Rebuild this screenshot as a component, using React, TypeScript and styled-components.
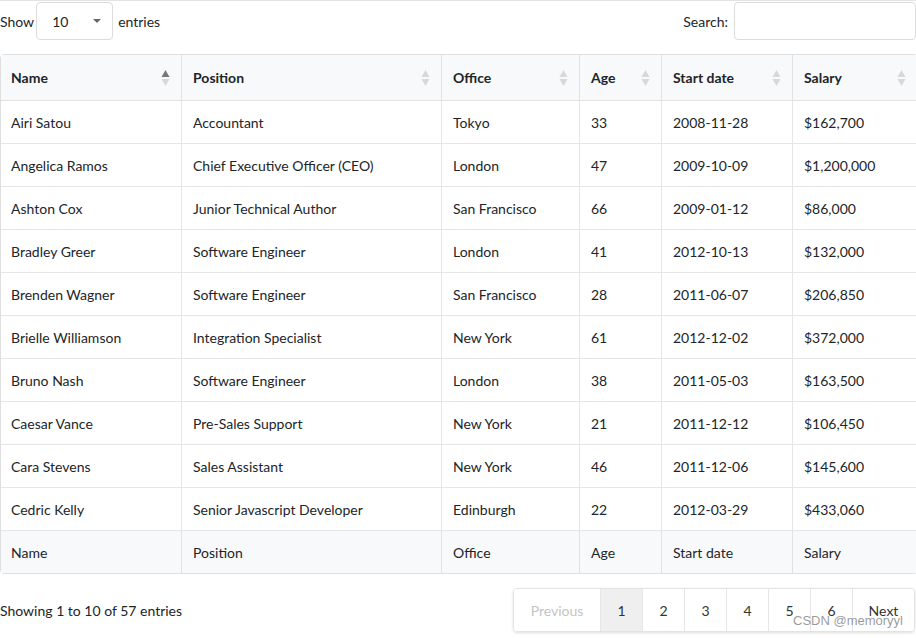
import * as React from "react";
import styled, { createGlobalStyle } from "styled-components";

const GlobalStyle = createGlobalStyle`
	body {
		margin: 0;
		background: #fff;
		font-family: Lato, "Open Sans", sans-serif;
		color: #212529;
	}
`;

const Page = styled.div`
	position: relative;
	width: 916px;
	height: 638px;
	border-top: 1px solid #e3e3e3;
	box-sizing: border-box;
	overflow: hidden;
`;

const TopBar = styled.div`
	display: flex;
	justify-content: space-between;
	align-items: center;
	height: 38px;
	margin-top: 1px;
	font-size: 14px;
`;

const Label = styled.label`
	display: flex;
	align-items: center;
	gap: 2px;
	color: #212529;
`;

const SelectBox = styled.div`
	display: flex;
	align-items: center;
	justify-content: space-between;
	box-sizing: border-box;
	width: 77px;
	height: 38px;
	padding: 0 11px 0 15px;
	border: 1px solid #dcdcdc;
	border-radius: 4px;
	margin-right: 3px;
`;

const Caret = styled.span`
	width: 0;
	height: 0;
	border-left: 4px solid transparent;
	border-right: 4px solid transparent;
	border-top: 4px solid #666;
`;

const SearchInput = styled.input`
	box-sizing: border-box;
	width: 182px;
	height: 38px;
	border: 1px solid #dcdcdc;
	border-radius: 4px;
	margin-left: 4px;
	outline: none;
`;

const Table = styled.table`
	margin-top: 14px;
	width: 916px;
	border-collapse: separate;
	border-spacing: 0;
	table-layout: fixed;
	border: 1px solid #dfdfdf;
	border-radius: 4px;
	font-size: 14px;
`;

const HeadCell = styled.th<{ $last?: boolean }>`
	position: relative;
	height: 45px;
	padding: 0 10px 0 11px;
	text-align: left;
	font-weight: 700;
	background: #f8f9fa;
	border-bottom: 1px solid #e2e2e2;
	border-right: ${p => (p.$last ? "none" : "1px solid #e2e2e2")};
	color: #212529;
	&:first-child {
		padding-left: 10px;
	}
`;

const Cell = styled.td<{ $last?: boolean }>`
	height: 42px;
	padding: 0 10px 0 11px;
	border-bottom: 1px solid #e6e6e6;
	border-right: ${p => (p.$last ? "none" : "1px solid #e6e6e6")};
	color: #212529;
	&:first-child {
		padding-left: 10px;
	}
`;

const FootCell = styled.td<{ $last?: boolean }>`
	height: 42px;
	padding: 0 10px 0 11px;
	background: #f8f9fa;
	border-right: ${p => (p.$last ? "none" : "1px solid #e2e2e2")};
	color: #212529;
	&:first-child {
		padding-left: 10px;
	}
`;

const SortIcon = styled.svg`
	position: absolute;
	right: 11px;
	top: 50%;
	transform: translateY(-50%);
`;

const BottomBar = styled.div`
	display: flex;
	justify-content: space-between;
	align-items: center;
	margin-top: 14px;
	font-size: 14px;
`;

const Pager = styled.div`
	display: flex;
	height: 42px;
	border: 1px solid #e3e3e3;
	border-radius: 4px;
	box-shadow: 0 1px 3px rgba(0, 0, 0, 0.12);
	margin-right: 1px;
	overflow: hidden;
`;

const PageButton = styled.div<{ $active?: boolean; $disabled?: boolean; $w: number }>`
	display: flex;
	align-items: center;
	justify-content: center;
	box-sizing: border-box;
	width: ${p => p.$w}px;
	border-left: 1px solid #e6e6e6;
	background: ${p => (p.$active ? "#efefef" : "#fff")};
	color: ${p => (p.$disabled ? "#c4c4c4" : "#333")};
	&:first-child {
		border-left: none;
	}
`;

const Watermark = styled.div`
	position: absolute;
	left: 793px;
	top: 612px;
	font-family: "Liberation Sans", Arial, sans-serif;
	font-size: 13px;
	color: rgba(120, 120, 120, 0.75);
`;

const columns = [
	{ name: "Name", width: 181 },
	{ name: "Position", width: 260 },
	{ name: "Office", width: 138 },
	{ name: "Age", width: 82 },
	{ name: "Start date", width: 131 },
	{ name: "Salary", width: 124 },
];

const rows = [
	["Airi Satou", "Accountant", "Tokyo", "33", "2008-11-28", "$162,700"],
	["Angelica Ramos", "Chief Executive Officer (CEO)", "London", "47", "2009-10-09", "$1,200,000"],
	["Ashton Cox", "Junior Technical Author", "San Francisco", "66", "2009-01-12", "$86,000"],
	["Bradley Greer", "Software Engineer", "London", "41", "2012-10-13", "$132,000"],
	["Brenden Wagner", "Software Engineer", "San Francisco", "28", "2011-06-07", "$206,850"],
	["Brielle Williamson", "Integration Specialist", "New York", "61", "2012-12-02", "$372,000"],
	["Bruno Nash", "Software Engineer", "London", "38", "2011-05-03", "$163,500"],
	["Caesar Vance", "Pre-Sales Support", "New York", "21", "2011-12-12", "$106,450"],
	["Cara Stevens", "Sales Assistant", "New York", "46", "2011-12-06", "$145,600"],
	["Cedric Kelly", "Senior Javascript Developer", "Edinburgh", "22", "2012-03-29", "$433,060"],
];

const Sort: React.FC<{ active?: boolean }> = ({ active }) => (
	<SortIcon width="9" height="18" viewBox="0 0 9 18">
		<path d="M4.5 1 L8.5 8 L0.5 8 Z" fill={active ? "#777" : "#d8d8d8"} />
		<path d="M4.5 17 L8.5 10 L0.5 10 Z" fill="#d8d8d8" />
	</SortIcon>
);

const pages = [
	{ label: "Previous", w: 86, disabled: true },
	{ label: "1", w: 42, active: true },
	{ label: "2", w: 42 },
	{ label: "3", w: 42 },
	{ label: "4", w: 42 },
	{ label: "5", w: 42 },
	{ label: "6", w: 42 },
	{ label: "Next", w: 62 },
];

export default function App() {
	return (
		<>
			<GlobalStyle />
			<Page>
				<TopBar>
					<Label>
						Show
						<SelectBox>
							<span>10</span>
							<Caret />
						</SelectBox>
						entries
					</Label>
					<Label>
						Search:
						<SearchInput type="search" />
					</Label>
				</TopBar>
				<Table>
					<colgroup>
						{columns.map(c => (
							<col key={c.name} style={{ width: c.width }} />
						))}
					</colgroup>
					<thead>
						<tr>
							{columns.map((c, i) => (
								<HeadCell key={c.name} $last={i === columns.length - 1}>
									{c.name}
									<Sort active={i === 0} />
								</HeadCell>
							))}
						</tr>
					</thead>
					<tbody>
						{rows.map(r => (
							<tr key={r[0]}>
								{r.map((v, i) => (
									<Cell key={i} $last={i === r.length - 1}>
										{v}
									</Cell>
								))}
							</tr>
						))}
					</tbody>
					<tfoot>
						<tr>
							{columns.map((c, i) => (
								<FootCell key={c.name} $last={i === columns.length - 1}>
									{c.name}
								</FootCell>
							))}
						</tr>
					</tfoot>
				</Table>
				<BottomBar>
					<span>Showing 1 to 10 of 57 entries</span>
					<Pager>
						{pages.map(p => (
							<PageButton key={p.label} $w={p.w} $active={p.active} $disabled={p.disabled}>
								{p.label}
							</PageButton>
						))}
					</Pager>
				</BottomBar>
				<Watermark>CSDN @memoryyl</Watermark>
			</Page>
		</>
	);
}
